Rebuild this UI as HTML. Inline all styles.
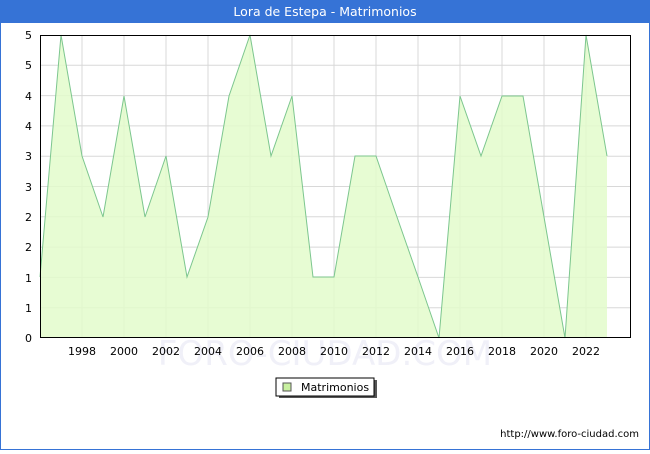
<!DOCTYPE html>
<html><head><meta charset="utf-8"><style>
body{margin:0;width:650px;height:450px;overflow:hidden;background:#fff;font-family:"DejaVu Sans","Liberation Sans",sans-serif;}
</style></head><body>
<svg width="650" height="450" xmlns="http://www.w3.org/2000/svg" font-family="DejaVu Sans, Liberation Sans, sans-serif">
<rect x="0" y="0" width="650" height="450" fill="#fff"/>
<rect x="0.5" y="0.5" width="649" height="449" fill="none" stroke="#3673d6"/>
<rect x="0" y="0" width="650" height="23" fill="#3673d6"/>
<text x="325" y="16" text-anchor="middle" fill="#fff" font-size="12.5">Lora de Estepa - Matrimonios</text>
<g stroke="#d8d8d8" stroke-width="1">
<line x1="40" x2="631" y1="65.3" y2="65.3"/><line x1="40" x2="631" y1="95.6" y2="95.6"/>
<line x1="40" x2="631" y1="125.9" y2="125.9"/><line x1="40" x2="631" y1="156.2" y2="156.2"/>
<line x1="40" x2="631" y1="186.5" y2="186.5"/><line x1="40" x2="631" y1="216.8" y2="216.8"/>
<line x1="40" x2="631" y1="247.1" y2="247.1"/><line x1="40" x2="631" y1="277.4" y2="277.4"/>
<line x1="40" x2="631" y1="307.7" y2="307.7"/>
<line x1="82" x2="82" y1="35" y2="338"/><line x1="124" x2="124" y1="35" y2="338"/>
<line x1="166" x2="166" y1="35" y2="338"/><line x1="208" x2="208" y1="35" y2="338"/>
<line x1="250" x2="250" y1="35" y2="338"/><line x1="292" x2="292" y1="35" y2="338"/>
<line x1="334" x2="334" y1="35" y2="338"/><line x1="376" x2="376" y1="35" y2="338"/>
<line x1="418" x2="418" y1="35" y2="338"/><line x1="460" x2="460" y1="35" y2="338"/>
<line x1="502" x2="502" y1="35" y2="338"/><line x1="544" x2="544" y1="35" y2="338"/>
<line x1="586" x2="586" y1="35" y2="338"/>
</g>
<text x="325" y="365" text-anchor="middle" fill="#f0f0f8" font-size="34">FORO-CIUDAD.COM</text>
<polygon fill="#e3fccb" fill-opacity="0.85" stroke="none" points="40,338 40,277 61,35 82,156 103,217 124,96 145,217 166,156 187,277 208,217 229,96 250,35 271,156 292,96 313,277 334,277 355,156 376,156 397,217 418,277 439,338 460,96 481,156 502,96 523,96 544,217 565,338 586,35 607,156 607,338"/>
<polyline fill="none" stroke="#7cc68e" stroke-width="1" points="40,277 61,35 82,156 103,217 124,96 145,217 166,156 187,277 208,217 229,96 250,35 271,156 292,96 313,277 334,277 355,156 376,156 397,217 418,277 439,338 460,96 481,156 502,96 523,96 544,217 565,338 586,35 607,156"/>
<rect x="40.5" y="35.5" width="590" height="302" fill="none" stroke="#000"/>
<g font-size="11" fill="#000" text-anchor="end">
<text x="32" y="39">5</text><text x="32" y="69">5</text><text x="32" y="100">4</text>
<text x="32" y="130">4</text><text x="32" y="160">3</text><text x="32" y="191">3</text>
<text x="32" y="221">2</text><text x="32" y="251">2</text><text x="32" y="282">1</text>
<text x="32" y="312">1</text><text x="32" y="342">0</text>
</g>
<g font-size="11" fill="#000" text-anchor="middle">
<text x="82" y="355">1998</text><text x="124" y="355">2000</text><text x="166" y="355">2002</text>
<text x="208" y="355">2004</text><text x="250" y="355">2006</text><text x="292" y="355">2008</text>
<text x="334" y="355">2010</text><text x="376" y="355">2012</text><text x="418" y="355">2014</text>
<text x="460" y="355">2016</text><text x="502" y="355">2018</text><text x="544" y="355">2020</text>
<text x="586" y="355">2022</text>
</g>
<rect x="279" y="380" width="98" height="18" fill="#555"/>
<rect x="276" y="378" width="98" height="18" fill="#fff" stroke="#000"/>
<rect x="283" y="383" width="8" height="8" fill="#c8f0a0" stroke="#555"/>
<text x="301" y="391" font-size="11" fill="#000">Matrimonios</text>
<text x="639" y="437" text-anchor="end" font-size="10" fill="#000">http://www.foro-ciudad.com</text>
</svg>
</body></html>
